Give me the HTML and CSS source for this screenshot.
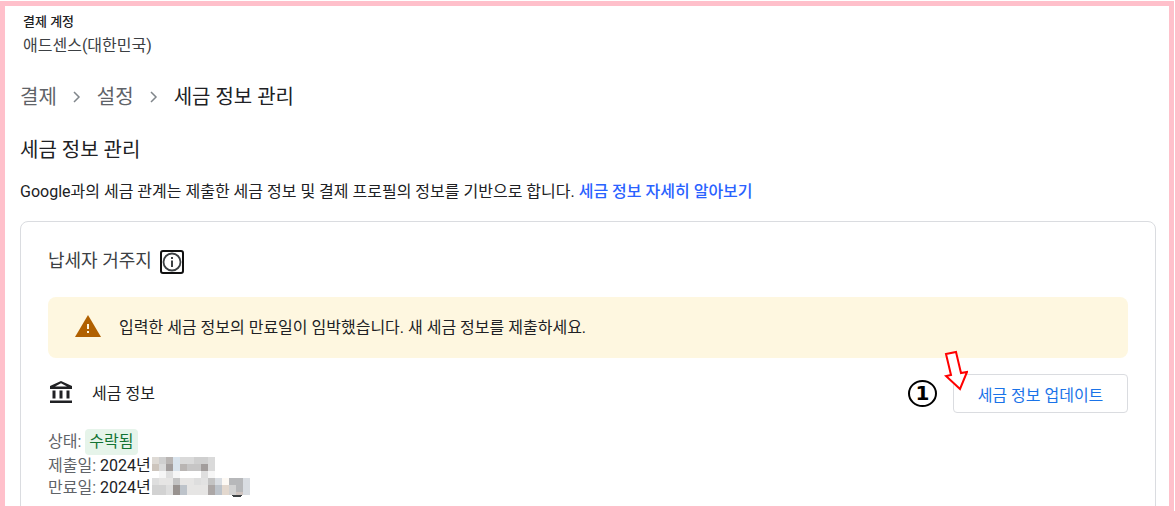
FILE: index.html
```html
<!DOCTYPE html>
<html lang="ko">
<head>
  <meta charset="UTF-8">
  <meta name="viewport" content="width=device-width, initial-scale=1.0">
  <title>세금 정보 관리</title>
  <link rel="stylesheet" href="styles.css">
</head>
<body>

  <div class="page">
    <header class="account">
      <div class="account-label">결제 계정</div>
      <div class="account-name">애드센스(대한민국)</div>
    </header>

    <nav class="breadcrumb">
      <a href="#">결제</a>
      <svg class="chevron" viewBox="0 0 8 12"><path d="M1 1l5 5-5 5"/></svg>
      <a href="#">설정</a>
      <svg class="chevron" viewBox="0 0 8 12"><path d="M1 1l5 5-5 5"/></svg>
      <span class="current">세금 정보 관리</span>
    </nav>

    <h1>세금 정보 관리</h1>
    <p class="intro">Google과의 세금 관계는 제출한 세금 정보 및 결제 프로필의 정보를 기반으로 합니다. <a href="#">세금 정보 자세히 알아보기</a></p>

    <section class="card">
      <div class="card-title">
        <h2>납세자 거주지</h2>
        <button class="info-btn" type="button" aria-label="도움말">
          <svg viewBox="0 0 20 20">
            <circle cx="10" cy="10" r="8.5" fill="none" stroke="#3c4043" stroke-width="1.8"/>
            <path d="M9 5h2v2H9zM9 8.500h2V15H9z" fill="#3c4043"/>
          </svg>
        </button>
      </div>

      <div class="alert">
        <svg class="alert-icon" viewBox="0 0 26 22">
          <path d="M13 0l13 22H0z" fill="#b06000"/>
          <path d="M12 9h2v5h-2zM12 16h2v2h-2z" fill="#fef7e0"/>
        </svg>
        <span>입력한 세금 정보의 만료일이 임박했습니다. 새 세금 정보를 제출하세요.</span>
      </div>

      <div class="tax-row">
        <div class="tax-title">
          <svg class="bank-icon" viewBox="0 0 22 22">
            <path fill-rule="evenodd" d="M11 0l11 5v3H0V5zM11 2.300L5 5.500h12z"/>
            <path d="M2.500 9.500h3v8h-3zM9.500 9.500h3v8h-3zM16.500 9.500h3v8h-3zM0 19.500h22V22H0z"/>
          </svg>
          <h3>세금 정보</h3>
        </div>
        <div class="update">
          <span class="step">1</span>
          <button class="update-btn" type="button">세금 정보 업데이트</button>
          <svg class="arrow" viewBox="0 0 24 42">
            <path d="M2 4l10-2 5 21 6-1-7 17L2 26l5-1z"/>
          </svg>
        </div>
      </div>

      <div class="details">
        <dl>
          <div class="status-line">
            <dt>상태:</dt>
            <dd class="status">수락됨</dd>
          </div>
          <div>
            <dt>제출일:</dt>
            <dd>2024년</dd>
          </div>
          <div>
            <dt>만료일:</dt>
            <dd>2024년</dd>
          </div>
        </dl>
        <!-- month and day are blocked out -->
        <svg class="mosaic" viewBox="0 0 98 40" shape-rendering="crispEdges">
          <path fill="#dedad5" d="M0 0h7v7H0z"/>
          <path fill="#cdc5bd" d="M0 7h7v7H0z"/>
          <path fill="#cfcfcf" d="M7 0h7v7H7zM42 0h14v7H42z"/>
          <path fill="#dadada" d="M7 7h7v7H7zM28 0h14v7H28zM56 0h7v14h-7z"/>
          <path fill="#b9b5b3" d="M14 0h7v7h-7zM28 7h7v7h-7z"/>
          <path fill="#a29d9c" d="M14 7h7v7h-7zM49 7h7v7h-7z"/>
          <path fill="#d9e3ec" d="M21 0h7v14h-7z"/>
          <path fill="#c6c5c5" d="M35 7h14v7H35z"/>
          <path fill="#dfdfdf" d="M14 14h7v7h-7zM49 14h7v7h-7z"/>
          <path fill="#f6f6f6" d="M7 14h7v7H7zM21 14h7v7h-7zM56 14h7v7h-7z"/>
          <path fill="#dedede" d="M0 21h7v7H0zM42 21h7v7h-7zM14 28h7v10h-7z"/>
          <path fill="#e6e5e4" d="M7 21h14v7H7zM28 21h14v7H28zM35 28h21v10H35z"/>
          <path fill="#d2d2d2" d="M0 28h14v10H0zM77 28h7v10h-7z"/>
          <path fill="#c3c3c3" d="M21 21h7v7h-7zM56 21h7v7h-7z"/>
          <path fill="#98928f" d="M21 28h7v10h-7z"/>
          <path fill="#bdc3ca" d="M28 28h7v10h-7zM63 28h7v10h-7z"/>
          <path fill="#e2e2e2" d="M49 21h7v7h-7z"/>
          <path fill="#aca7a6" d="M56 28h7v10h-7z"/>
          <path fill="#d9dde2" d="M63 21h7v7h-7zM91 21h7v17h-7z"/>
          <path fill="#fdf9f4" d="M70 21h7v7h-7z"/>
          <path fill="#e3d8ce" d="M70 28h7v10h-7z"/>
          <path fill="#b7b8ba" d="M77 21h14v7H77zM84 28h7v7h-7z"/>
          <path fill="#cfc4c0" d="M84 35h7v3h-7z"/>
          <path fill="#3c4043" d="M79 38h12l-3 2h-6z"/>
        </svg>
      </div>
    </section>
  </div>

</body>
</html>
```

FILE: styles.css
```css
* {
  box-sizing: border-box;
}
body {
  margin: 0;
  padding-top: 1px;
  height: 100vh;
  overflow: hidden;
  background: white;
  color: #202124;
  font-family: Roboto, "Noto Sans CJK KR", sans-serif;
  font-size: 16px;
}
h1, h2, h3, p, dl, dd {
  margin: 0;
  font-weight: 400;
}
a {
  text-decoration: none;
}
.page {
  height: 100%;
  overflow: hidden;
  margin-right: 1px;
  padding: 8px 13px 0 15px;
  border: 5px solid pink;
}
.account {
  padding-left: 3px;
}
.account-label {
  font-size: 13px;
  font-weight: 500;
  line-height: 16px;
}
.account-name {
  margin-top: 4px;
  line-height: 24px;
  color: #3c4043;
}
.breadcrumb {
  display: flex;
  align-items: center;
  gap: 16px;
  margin-top: 25px;
  font-size: 20px;
  line-height: 28px;
}
.breadcrumb a {
  color: #5f6368;
}
.chevron {
  width: 8px;
  height: 12px;
  fill: none;
  stroke: #80868b;
  stroke-width: 1.5;
}
h1 {
  margin-top: 25px;
  font-size: 20px;
  line-height: 28px;
}
.intro {
  margin-top: 16px;
  line-height: 24px;
}
.intro a {
  font-weight: 500;
  color: #2962ff;
}
.card {
  margin-top: 17px;
  height: 400px;
  padding: 26px 27px;
  border: 1px solid #dadce0;
  border-radius: 8px;
}
.card-title {
  display: flex;
  align-items: center;
  gap: 8px;
}
h2 {
  padding-bottom: 2px;
  font-size: 18px;
  line-height: 26px;
  color: #3c4043;
}
.info-btn {
  width: 24px;
  height: 24px;
  padding: 0;
  border: 2px solid #101010;
  border-radius: 3px;
  background: white;
}
.info-btn svg {
  display: block;
  width: 20px;
  height: 20px;
}
.alert {
  display: flex;
  align-items: center;
  gap: 18px;
  height: 61px;
  margin-top: 21px;
  padding: 0 27px 3px;
  border-radius: 8px;
  background: #fef7e0;
}
.alert-icon {
  width: 26px;
  height: 22px;
}
.tax-row {
  display: flex;
  align-items: center;
  margin-top: 16px;
}
.tax-title {
  display: flex;
  align-items: center;
  padding-bottom: 4px;
}
.bank-icon {
  width: 22px;
  height: 22px;
  margin: 0 20px 0 2px;
  fill: #202124;
}
h3 {
  font-size: 16px;
}
.update {
  position: relative;
  display: flex;
  align-items: center;
  gap: 16px;
  margin-left: auto;
}
.step {
  width: 29px;
  height: 27px;
  border: 2px solid black;
  border-radius: 50%;
  color: black;
  font: bold 20px/23px "DejaVu Sans", sans-serif;
  text-align: center;
}
.update-btn {
  width: 175px;
  height: 39px;
  border: 1px solid #dadce0;
  border-radius: 4px;
  background: white;
  color: #1a73e8;
  font: inherit;
}
/* points at the update button */
.arrow {
  position: absolute;
  top: -24px;
  left: 36px;
  width: 24px;
  height: 42px;
  fill: white;
  stroke: red;
  stroke-width: 2;
}
.details {
  position: relative;
  margin-top: 16px;
}
.details dl div {
  display: flex;
  align-items: center;
  gap: 4px;
  line-height: 22px;
}
dt {
  color: #5f6368;
}
.details .status-line {
  line-height: 26px;
}
.status {
  padding: 0 4px;
  border-radius: 4px;
  background: #e6f4ea;
  color: #137333;
}
/* covers the end of both date lines */
.mosaic {
  position: absolute;
  top: 28px;
  left: 104px;
  width: 98px;
  height: 40px;
}
```
